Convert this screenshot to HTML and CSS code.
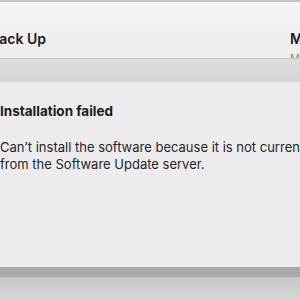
FILE: index.html
```html
<!DOCTYPE html>
<html>
<head>
<meta charset="utf-8">
<link rel="stylesheet" href="styles.css">
</head>
<body>
<div class="screen">
  <div class="top-edge"></div>
  <div class="window-head">
    <div class="head-title">Back Up</div>
    <div class="head-right">
      <div class="head-right-title">Mac</div>
      <div class="head-right-sub">Mac</div>
    </div>
  </div>
  <div class="sheet-shadow"></div>
  <div class="sheet">
    <div class="sheet-title">Installation failed</div>
    <p class="sheet-text">Can’t install the software because it is not currently available<br>from the Software Update server.</p>
  </div>
  <div class="sheet-bottom"></div>
  <div class="below"></div>
</div>
</body>
</html>
```
FILE: styles.css
```css
html, body {
  margin: 0;
  padding: 0;
}
body {
  width: 300px;
  height: 300px;
  overflow: hidden;
  background: #d0d0d0;
  font-family: Inter, "Liberation Sans", sans-serif;
}
.screen {
  display: flex;
  flex-direction: column;
  width: 300px;
  height: 300px;
  overflow: hidden;
}
.top-edge {
  height: 2px;
  background: #c3c3c3;
  flex: none;
}
.window-head {
  height: 56px;
  flex: none;
  background: linear-gradient(#f4f4f4, #ededed);
  border-bottom: 1px solid #c8c8c8;
  display: flex;
  justify-content: space-between;
  overflow: hidden;
}
.head-title {
  margin-left: -10px;
  margin-top: 28px;
  font-size: 14px;
  font-weight: 600;
  color: #1a1a1a;
  line-height: 18px;
}
.head-right {
  margin-top: 28px;
  margin-right: -30px;
  width: 40px;
  white-space: nowrap;
}
.head-right-title {
  font-size: 14px;
  font-weight: 600;
  color: #1a1a1a;
  line-height: 18px;
}
.head-right-sub {
  font-size: 11px;
  color: #8a8a8a;
  line-height: 14px;
  margin-top: 3px;
}
.sheet-shadow {
  height: 23px;
  flex: none;
  background: linear-gradient(#dddddd, #d6d6d6);
}
.sheet {
  height: 185px;
  flex: none;
  background: #ececec;
  padding: 21px 0 0 0;
  box-sizing: border-box;
  overflow: hidden;
}
.sheet-title {
  font-size: 13.5px;
  font-weight: 700;
  color: #1c1c1c;
  line-height: 16px;
  white-space: nowrap;
}
.sheet-text {
  margin: 20px 0 0 0;
  font-size: 13px;
  line-height: 17px;
  color: #262626;
  white-space: nowrap;
}
.sheet-bottom {
  height: 10px;
  flex: none;
  background: #a9a9a9;
}
.below {
  flex: 1;
  background: linear-gradient(#c6c6c6, #d6d6d6);
}
```
